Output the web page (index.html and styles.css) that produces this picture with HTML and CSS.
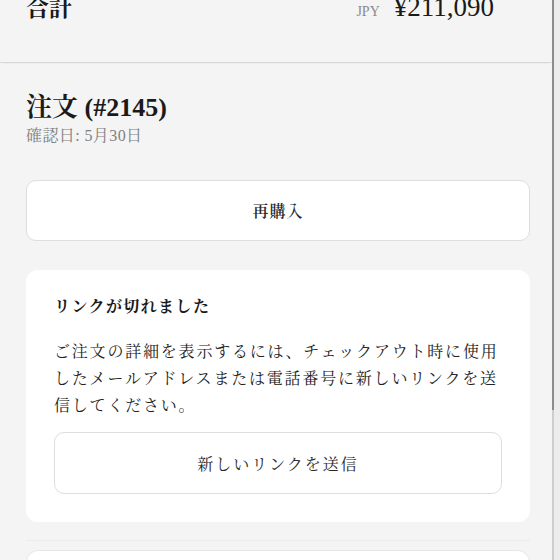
FILE: index.html
```html
<!DOCTYPE html>
<html lang="ja">
<head>
    <meta charset="UTF-8" />
    <meta name="viewport" content="width=device-width, initial-scale=1" />
    <title>注文 (#2145)</title>
    <link rel="stylesheet" href="styles.css">
</head>
<body>
    <div class="page">
        <main class="content">
            <div class="total-row">
                <span class="total-label">合計</span>
                <span class="total-amount">
                    <span class="currency">JPY</span>
                    <span class="price">¥211,090</span>
                </span>
            </div>

            <section class="order">
                <h1 class="order-title">注文 (#2145)</h1>
                <p class="order-date">確認日: 5月30日</p>

                <button class="btn btn-reorder" type="button">再購入</button>

                <div class="card">
                    <h2 class="card-title">リンクが切れました</h2>
                    <p class="card-text">ご注文の詳細を表示するには、チェックアウト時に使用したメールアドレスまたは電話番号に新しいリンクを送信してください。</p>
                    <button class="btn btn-send" type="button">新しいリンクを送信</button>
                </div>

                <div class="divider"></div>
                <div class="card card-next"></div>
            </section>
        </main>
        <div class="scrollbar" aria-hidden="true">
            <div class="scroll-track"><div class="scroll-thumb"></div></div>
        </div>
    </div>
</body>
</html>
```

FILE: styles.css
```css
/* Grundlayout */
* {
    box-sizing: border-box;
}
html, body {
    margin: 0;
    height: 100%;
    overflow: hidden;
    background: #f4f4f4;
    color: #1a1a1a;
    font-family: "Liberation Serif", "Noto Serif CJK JP", "Noto Sans CJK JP", serif;
}
.page {
    display: flex;
    height: 100%;
}
.content {
    flex: 1;
    min-width: 0;
}

/* Summe oben */
.total-row {
    display: flex;
    justify-content: space-between;
    align-items: baseline;
    margin-top: -9px;
    padding: 0 58px 37px 26px;
    border-bottom: 1px solid #d8d8d8;
    box-shadow: 0 4px 0 -3px #ececec;
}
.total-label {
    font-size: 23px;
    font-weight: 700;
    line-height: 32px;
}
.total-amount {
    display: flex;
    align-items: baseline;
    gap: 14px;
}
.currency {
    font-size: 14px;
    color: #8a8a8a;
}
.price {
    font-size: 27px;
    line-height: 32px;
}

/* Bestellung */
.order {
    padding: 30px 22px 0 26px;
}
.order-title {
    margin: 0;
    font-size: 26px;
    font-weight: 700;
    line-height: 30px;
}
.order-date {
    margin: 3px 0 0 0;
    font-size: 16px;
    line-height: 20px;
    color: #808080;
    letter-spacing: 0.4px;
}

/* Buttons */
.btn {
    display: block;
    width: 100%;
    background: #fff;
    border: 1px solid #dedede;
    border-radius: 10px;
    font-family: inherit;
    color: #2a2a2a;
    cursor: pointer;
}
.btn-reorder {
    margin-top: 34px;
    height: 61px;
    font-size: 16px;
    font-weight: 600;
    letter-spacing: 1px;
}
.btn-send {
    margin-top: 13px;
    height: 62px;
    font-size: 16px;
    letter-spacing: 2px;
}

/* Karte */
.card {
    margin-top: 29px;
    padding: 25px 28px 28px 28px;
    background: #fff;
    border-radius: 12px;
}
.card-title {
    margin: 0;
    font-size: 16px;
    font-weight: 700;
    line-height: 24px;
    letter-spacing: 1.4px;
}
.card-text {
    margin: 19px 0 0 0;
    font-size: 16px;
    line-height: 27px;
    letter-spacing: 1.8px;
    color: #222;
}
.divider {
    margin-top: 18px;
    border-top: 1px solid #ebebeb;
}
.card-next {
    margin-top: 9px;
    height: 40px;
    padding: 0;
    border: 1px solid #e6e6e6;
}

/* Scrollleiste */
.scrollbar {
    width: 8px;
    background: #ececec;
}
.scroll-track {
    width: 2px;
    height: 100%;
    background: #cdcdcd;
}
.scroll-thumb {
    height: 410px;
    background: #8c8c8c;
}
```
